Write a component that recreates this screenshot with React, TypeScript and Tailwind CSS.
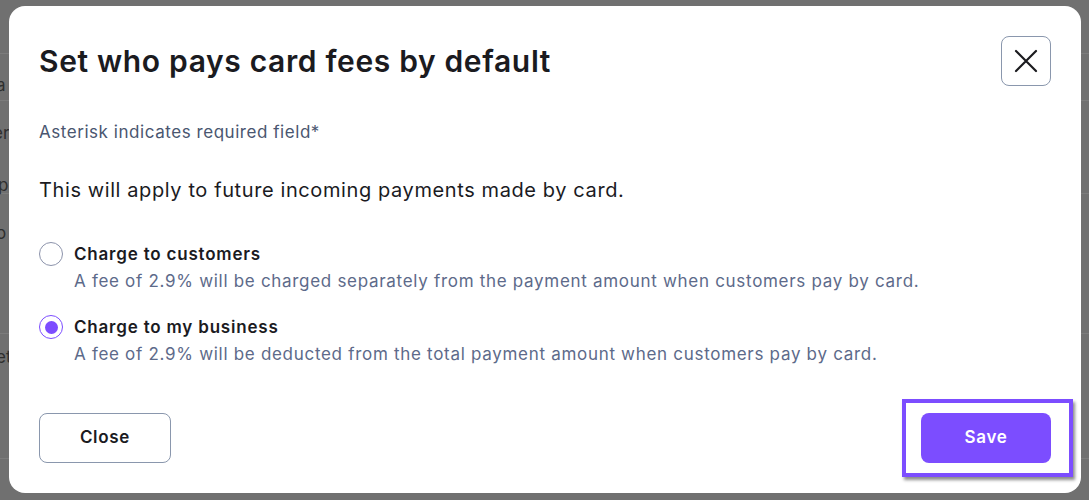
import React from "react";

function Radio({ checked }: { checked?: boolean }) {
  return checked ? (
    <span className="flex h-[24px] w-[24px] shrink-0 items-center justify-center rounded-full border-[1.5px] border-[#7c4dff] bg-white">
      <span className="h-[13px] w-[13px] rounded-full bg-[#7c4dff]" />
    </span>
  ) : (
    <span className="h-[24px] w-[24px] shrink-0 rounded-full border-[1.5px] border-[#8c93ab] bg-white" />
  );
}

function Option({ title, desc, checked, className }: { title: string; desc: string; checked?: boolean; className?: string }) {
  return (
    <div className={className}>
      <div className="flex items-center gap-[11px]">
        <Radio checked={checked} />
        <span className="text-[17px] leading-[24px] font-semibold tracking-[0.8px] text-[#1b1b1f]">{title}</span>
      </div>
      <p className="mt-[3px] pl-[35px] text-[17px] leading-[24px] tracking-[0.7px] text-[#5d6a8a]">{desc}</p>
    </div>
  );
}

export default function App() {
  return (
    <div className="relative h-[500px] w-[1089px] overflow-hidden bg-[#707070] font-['Inter',sans-serif]">
      {/* dimmed page underneath */}
      <div className="absolute inset-0 text-[17px] text-[#2e2e2e]">
        <div className="absolute left-0 right-0 top-[53px] h-px bg-[#7c7c7c]" />
        <div className="absolute left-0 right-0 top-[100px] h-px bg-[#7c7c7c]" />
        <div className="absolute left-0 right-0 top-[193px] h-px bg-[#7c7c7c]" />
        <div className="absolute left-0 right-0 top-[333px] h-px bg-[#7c7c7c]" />
        <div className="absolute left-0 right-0 top-[458px] h-px bg-[#7c7c7c]" />
        <span className="absolute left-[-4px] top-[73px]">a</span>
        <span className="absolute left-[-7px] top-[121px]">er</span>
        <span className="absolute left-[-2px] top-[173px]">p</span>
        <span className="absolute left-[-4px] top-[221px]">o</span>
        <span className="absolute left-[-4px] top-[345px]">et</span>
      </div>

      <div className="relative pl-[9px] pt-[6px]">
        <div className="flex h-[487px] w-[1072px] flex-col rounded-[16px] bg-white pb-[30px] pl-[30px] pr-[30px] pt-[30px]">
          <div className="flex h-[50px] items-center justify-between">
            <h1 className="text-[30px] font-semibold leading-[36px] tracking-[0.65px] text-[#1b1b1f]">
              Set who pays card fees by default
            </h1>
            <button className="flex h-[50px] w-[50px] items-center justify-center rounded-[8px] border border-[#8a97ad] bg-white">
              <svg width="24" height="24" viewBox="0 0 24 24" fill="none" stroke="#1b1b1f" strokeWidth="2.2" strokeLinecap="round">
                <path d="M2 2 L22 22 M22 2 L2 22" />
              </svg>
            </button>
          </div>

          <p className="mt-[34px] text-[17px] leading-[24px] tracking-[0.55px] text-[#4a5670]">Asterisk indicates required field*</p>

          <p className="mt-[32px] text-[20px] leading-[28px] tracking-[0.6px] text-[#1b1b1f]">
            This will apply to future incoming payments made by card.
          </p>

          <Option
            className="mt-[38px]"
            title="Charge to customers"
            desc="A fee of 2.9% will be charged separately from the payment amount when customers pay by card."
          />
          <Option
            className="mt-[22px]"
            checked
            title="Charge to my business"
            desc="A fee of 2.9% will be deducted from the total payment amount when customers pay by card."
          />

          <div className="mt-auto flex items-center justify-between">
            <button className="h-[50px] w-[132px] rounded-[8px] border border-[#8a97ad] bg-white text-[17px] font-semibold tracking-[0.7px] text-[#1b1b1f]">
              Close
            </button>
            <div className="-my-[14px] -mr-[22px] border-[4px] border-[#7c4dff] bg-white pb-[10px] pl-[15px] pr-[18px] pt-[10px] shadow-[2px_3px_3px_rgba(0,0,0,0.45)]">
              <button className="block h-[50px] w-[130px] rounded-[8px] bg-[#7c4dff] text-[17px] font-semibold tracking-[0.7px] text-white">
                Save
              </button>
            </div>
          </div>
        </div>
      </div>
    </div>
  );
}
